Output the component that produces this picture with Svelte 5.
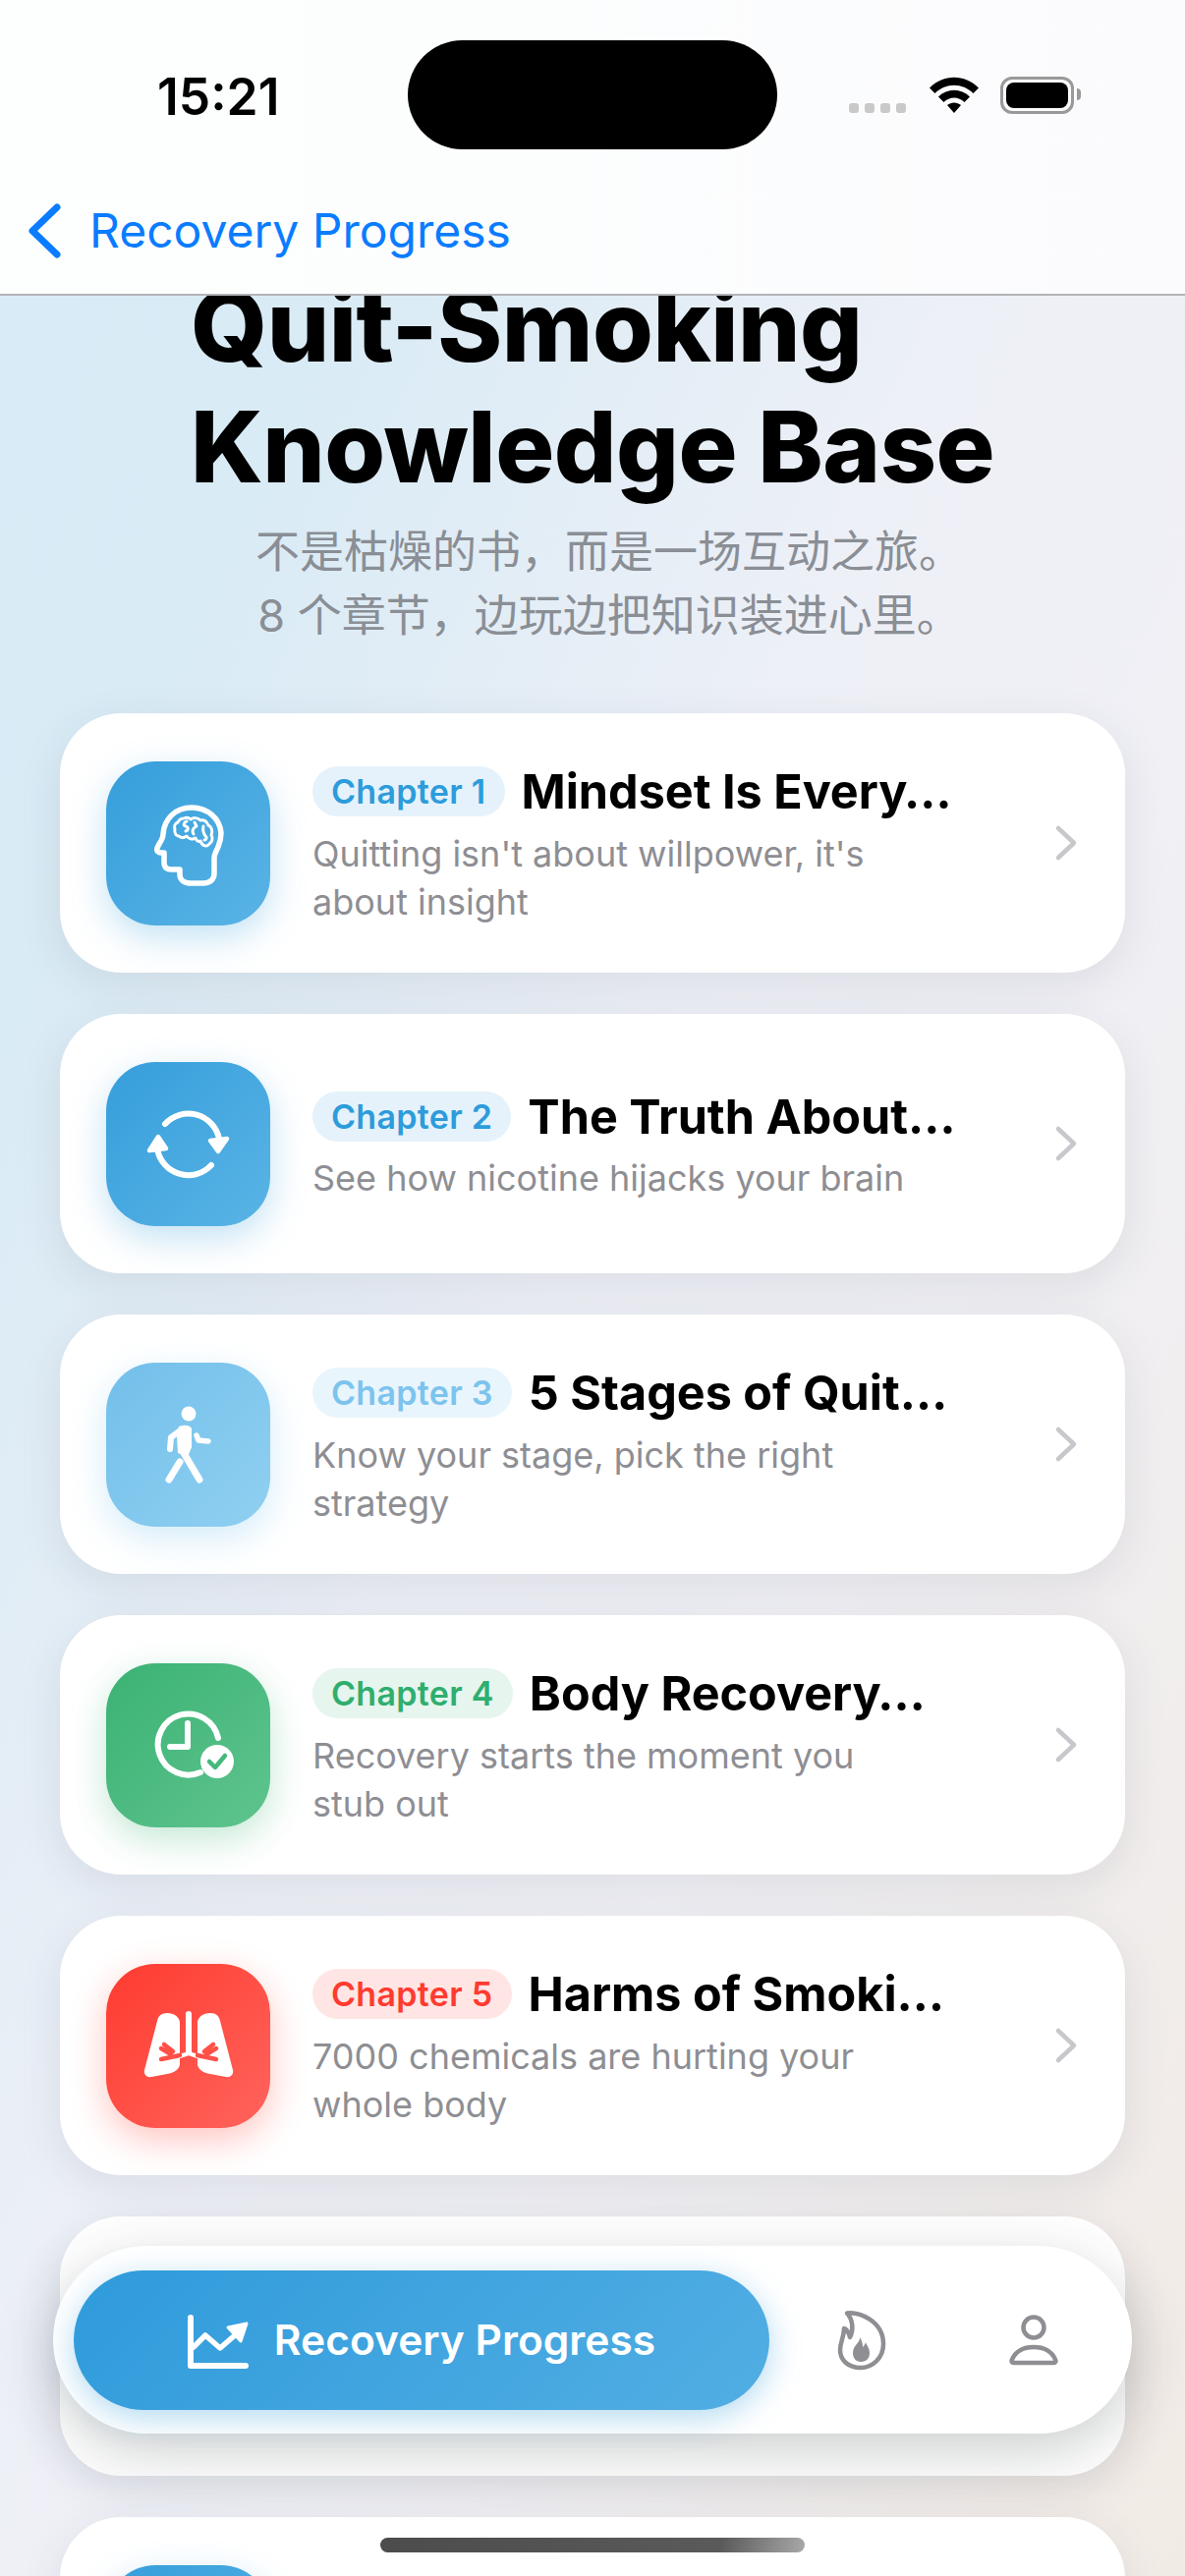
<script lang="ts">
  const chapters = [
    { n: 1, tone: "blue", icon: "brain", title: "Mindset Is Every…", sub: "Quitting isn't about willpower, it's about insight" },
    { n: 2, tone: "blue", icon: "sync", title: "The Truth About…", sub: "See how nicotine hijacks your brain" },
    { n: 3, tone: "sky", icon: "walk", title: "5 Stages of Quit…", sub: "Know your stage, pick the right strategy" },
    { n: 4, tone: "green", icon: "clock", title: "Body Recovery…", sub: "Recovery starts the moment you stub out" },
    { n: 5, tone: "red", icon: "lungs", title: "Harms of Smoki…", sub: "7000 chemicals are hurting your whole body" },
  ];
</script>

{#snippet glyph(name: string)}
  <svg class="glyph" viewBox="0 0 167 167" fill="none" stroke="#fff" stroke-linecap="round" stroke-linejoin="round">
    {#if name === "brain"}
      <g transform="translate(32 16)">
        <path stroke-width="5.5" d="M55 31C38 31 27 43 26 58C26 62 24 65 22 68L20 72C19 75 21 77 24 77L27 77L27 87C27 92 30 94 34 94L43 94L43 99C43 105 48 108 54 108L67 108C74 108 78 104 78 98L78 82C78 78 80 76 82 71C84 66 85 62 85 57C84 42 71 31 55 31Z" />
        <path stroke-width="3" d="M47 42C44 42 42 44 41 46C38 47 37 50 38 53C37 56 39 60 42 60C44 62 47 62 50 60C52 63 56 64 59 62C60 65 62 66 64 65C66 71 71 71 73 68C76 66 77 62 75 59C77 55 75 50 72 49C71 45 67 43 64 44C61 41 57 41 54 43C52 41 49 41 47 42Z" />
        <path stroke-width="3" d="M50 45C47 46 46 49 49 50C52 51 52 54 49 55M58 46L60 50C56 52 55 55 57 58M67 50C66 54 67 57 69 60C71 61 70 64 68 64" />
      </g>
    {:else if name === "sync"}
      <path stroke-width="6" d="M60 63A32 32 0 0 1 115 78M107 105A32 32 0 0 1 52 88" />
      <path fill="#fff" stroke-width="4.5" d="M106 80L123 78L114 91ZM44 90L61 88L53 76Z" />
    {:else if name === "walk"}
      <g transform="translate(22 14)">
        <circle cx="62" cy="38" r="7.5" fill="#fff" stroke="none" />
        <path fill="#fff" stroke="none" d="M52 51C57 49 63 49 65 53L65 72L61 82L51 78L50 60Z" />
        <path stroke-width="6" d="M55 54L44 62L43 74" />
        <path stroke-width="5.5" d="M70 60L72 65L82 66" />
        <path stroke-width="7" d="M57 78L73 105M53 87L42 105" />
      </g>
    {:else if name === "clock"}
      <path stroke-width="6" d="M114 76A31 31 0 1 0 96 111M83 61L83 85L65 85" />
      <circle cx="113" cy="100" r="17" fill="#fff" stroke="none" />
      <path stroke="#45b87c" stroke-width="4.5" d="M105 100L111 106L121 94" />
    {:else if name === "lungs"}
      <path fill="#fff" stroke="none" d="M62 50C56 50 53 53 52 58L39 108C38 112 41 116 46 115L62 112C69 111 75 107 75 102L75 60C75 54 69 50 62 50Z" />
      <path fill="#fff" stroke="none" d="M106 50C112 50 115 53 116 58L129 108C130 112 127 116 122 115L106 112C99 111 93 107 93 102L93 60C93 54 99 50 106 50Z" />
      <path stroke-width="6" d="M84 51L84 90" />
      <path stroke-width="4" d="M75 94L84 91L93 94" />
      <path stroke="#ff5048" stroke-width="4.5" d="M75 93L56 97M68 89L59 82M66 92L56 86M93 93L112 97M100 89L109 82M102 92L112 86" />
    {/if}
  </svg>
{/snippet}

<div class="screen">
  <main class="page">
    <h1>Quit-Smoking<br />Knowledge Base</h1>
    <p class="lede">不是枯燥的书，而是一场互动之旅。<br />8 个章节，边玩边把知识装进心里。</p>

    <section class="list">
      {#each chapters as c}
        <article class="card">
          <div class="tile {c.tone}">{@render glyph(c.icon)}</div>
          <div class="body">
            <div class="head">
              <span class="badge {c.tone}">Chapter {c.n}</span>
              <span class="title">{c.title}</span>
            </div>
            <p class="sub">{c.sub}</p>
          </div>
          <svg class="chev" viewBox="0 0 24 38" fill="none" stroke="#c7c7cc" stroke-width="4.5" stroke-linecap="round" stroke-linejoin="round">
            <path d="M4 4L20 19L4 34" />
          </svg>
        </article>
      {/each}
      <article class="card"></article>
      <article class="card"><div class="tile blue"></div></article>
    </section>
  </main>

  <header class="top">
    <div class="status">
      <span class="time">15:21</span>
      <div class="island"></div>
      <div class="indicators">
        <div class="dots"><i></i><i></i><i></i><i></i></div>
        <svg class="wifi" viewBox="0 0 50 38" fill="#000">
          <path d="M0 11.5C14-3 36-3 50 11.5L44.5 17C33.5 6 16.5 6 5.5 17Z" />
          <path d="M9 20.5C18 11.5 32 11.5 41 20.5L35.5 26C29.5 20 20.5 20 14.5 26Z" />
          <path d="M18 29C22 25.5 28 25.5 32 29L25 37Z" />
        </svg>
        <div class="battery"><b></b></div>
      </div>
    </div>
    <nav class="back">
      <svg class="back-chev" viewBox="0 0 34 56" fill="none" stroke="#0a7cff" stroke-width="7" stroke-linecap="round" stroke-linejoin="round">
        <path d="M30 4L5 28L30 52" />
      </svg>
      <span>Recovery Progress</span>
    </nav>
  </header>

  <div class="tabbar">
    <div class="tab-active">
      <svg class="chart" viewBox="0 0 100 80" fill="none" stroke="#fff" stroke-linecap="round" stroke-linejoin="round">
        <path stroke-width="6" d="M27 17L27 66L83 66" />
        <path stroke-width="5.5" d="M30 47L42 35L57 48L72 35" />
        <path fill="#fff" stroke-width="3" d="M65 27L84 23L78 41Z" />
      </svg>
      <span>Recovery Progress</span>
    </div>
    <div class="tab">
      <svg class="tab-icon" viewBox="50 47 60 70" fill="none" stroke="#8e8e93" stroke-width="4.5" stroke-linecap="round" stroke-linejoin="round">
        <path d="M64 54.5C76 53 101 62 101 86C101 100 90 110 78 110C65 110 57 102 57 92C57 84 61 79 61 70C64 71 66 75 67 79C71 71 70 61 64 54.5Z" />
        <path fill="#8e8e93" stroke="none" d="M77 79C78 84 70 87 70 95C70 100 73 104 78 104C84 104 87 100 87 95C87 90 84 87 83 84C82 87 81 88 80 89C80 85 79 82 77 79Z" />
      </svg>
    </div>
    <div class="tab">
      <svg class="tab-icon" viewBox="0 -5 60 70" fill="none" stroke="#8e8e93" stroke-width="4.5" stroke-linejoin="round">
        <circle cx="30" cy="17" r="10.5" />
        <path d="M10 53C7.5 53 7 51.5 8 49.5C11.5 42 19 37 30 37C41 37 48.5 42 52 49.5C53 51.5 52.5 53 50 53Z" />
      </svg>
    </div>
  </div>

  <div class="home"></div>
</div>

<style>
  :global(body) {
    margin: 0;
  }

  .screen {
    position: relative;
    width: 1206px;
    height: 2622px;
    overflow: hidden;
    font-family: Inter, "Noto Sans CJK SC", sans-serif;
    background: linear-gradient(
      to bottom right,
      #d8ecf7 0%,
      #d9ebf5 20%,
      #eef0f7 48%,
      #f0f0f5 65%,
      #f2ebe5 100%
    );
  }

  .page {
    padding: 270px 61px 0;
  }

  h1 {
    width: fit-content;
    margin: 0 auto;
    font-size: 100px;
    line-height: 123px;
    font-weight: 800;
    letter-spacing: -0.5px;
    color: #000;
  }

  .lede {
    margin: 13px 0 0;
    padding-left: 34px;
    font-size: 45px;
    line-height: 65px;
    color: #8a8e95;
    text-align: center;
  }

  .list {
    display: flex;
    flex-direction: column;
    gap: 42px;
    margin-top: 67px;
  }

  .card {
    display: flex;
    align-items: center;
    gap: 43px;
    flex: none;
    box-sizing: border-box;
    height: 264px;
    padding: 0 48px 0 47px;
    background: #fff;
    border-radius: 62px;
    box-shadow: 0 12px 44px rgba(50, 60, 80, 0.1);
  }

  .tile {
    display: flex;
    flex: none;
    width: 167px;
    height: 167px;
    border-radius: 50px;
  }

  .tile.blue {
    background: linear-gradient(135deg, #359edb, #5ab4e5);
    box-shadow: 0 12px 36px rgba(53, 158, 219, 0.3);
  }

  .tile.sky {
    background: linear-gradient(135deg, #72bfea, #90d0f1);
    box-shadow: 0 12px 36px rgba(114, 191, 234, 0.3);
  }

  .tile.green {
    background: linear-gradient(135deg, #3bb273, #5fc48f);
    box-shadow: 0 12px 36px rgba(59, 178, 115, 0.3);
  }

  .tile.red {
    background: linear-gradient(135deg, #ff3b30, #ff645c);
    box-shadow: 0 12px 36px rgba(255, 59, 48, 0.3);
  }

  .glyph {
    width: 167px;
    height: 167px;
  }

  .body {
    flex: 1;
    min-width: 0;
    padding-top: 3px;
  }

  .head {
    display: flex;
    align-items: center;
    gap: 17px;
    height: 58px;
    white-space: nowrap;
  }

  .badge {
    padding: 0 19px;
    height: 51px;
    line-height: 51px;
    border-radius: 26px;
    font-size: 34px;
    font-weight: 600;
    letter-spacing: 0.3px;
  }

  .badge.blue {
    background: #e5f2fb;
    color: #2d9cdb;
  }

  .badge.sky {
    background: #e9f5fc;
    color: #7cc4ee;
  }

  .badge.green {
    background: #e6f5ee;
    color: #2fae6e;
  }

  .badge.red {
    background: #ffe6e5;
    color: #ff3b30;
  }

  .title {
    font-size: 48.5px;
    font-weight: 700;
    color: #000;
  }

  .sub {
    margin: 10px 0 0;
    max-width: 622px;
    font-size: 36px;
    line-height: 49px;
    color: #8e8e93;
  }

  .chev {
    flex: none;
    width: 24px;
    height: 38px;
  }

  .top {
    position: absolute;
    top: 0;
    left: 0;
    right: 0;
    height: 301px;
    box-sizing: border-box;
    background: linear-gradient(90deg, #fdfffe, #fbfbfd);
    border-bottom: 2px solid #b2b4b7;
  }

  .status {
    position: relative;
    display: flex;
    align-items: center;
    justify-content: space-between;
    height: 193px;
    padding: 0 113px 0 160px;
  }

  .time {
    margin-top: 2px;
    font-size: 51.5px;
    font-weight: 600;
    color: #000;
  }

  .island {
    position: absolute;
    left: 415px;
    top: 41px;
    width: 376px;
    height: 111px;
    border-radius: 56px;
    background: #000;
  }

  .indicators {
    display: flex;
    align-items: center;
    gap: 22px;
  }

  .dots {
    display: flex;
    gap: 6px;
    margin-top: 26px;
    margin-right: 2px;
  }

  .dots i {
    width: 10px;
    height: 10px;
    border-radius: 3px;
    background: #c9c9c9;
  }

  .wifi {
    width: 50px;
    height: 38px;
  }

  .battery {
    position: relative;
    box-sizing: border-box;
    width: 75px;
    height: 38px;
    padding: 3px;
    border: 3px solid #999;
    border-radius: 12px;
  }

  .battery b {
    display: block;
    height: 100%;
    border-radius: 8px;
    background: #000;
  }

  .battery::after {
    content: "";
    position: absolute;
    right: -10px;
    top: 9px;
    width: 4px;
    height: 12px;
    border-radius: 0 4px 4px 0;
    background: #999;
  }

  .back {
    display: flex;
    align-items: center;
    gap: 29px;
    padding: 12px 0 0 28px;
    color: #0a7cff;
    font-size: 48px;
  }

  .back-chev {
    width: 34px;
    height: 56px;
  }

  .tabbar {
    position: absolute;
    left: 54px;
    top: 2286px;
    display: flex;
    align-items: center;
    gap: 4px;
    box-sizing: border-box;
    width: 1098px;
    height: 191px;
    padding: 0 15px 0 21px;
    border-radius: 96px;
    background: #fff;
    box-shadow: 0 18px 60px rgba(40, 50, 50, 0.24);
  }

  .tab-active {
    display: flex;
    align-items: center;
    justify-content: center;
    flex: none;
    gap: 26px;
    width: 708px;
    height: 142px;
    margin-right: 6px;
    border-radius: 71px;
    background: linear-gradient(135deg, #2f9bdb, #52aee3);
    box-shadow: 0 8px 32px rgba(53, 158, 219, 0.38);
    color: #fff;
    font-size: 42.5px;
    font-weight: 600;
  }

  .chart {
    width: 100px;
    height: 80px;
    margin: 0 -14px 0 -24px;
  }

  .tab {
    display: flex;
    flex: 1;
    justify-content: center;
  }

  .tab-icon {
    width: 60px;
    height: 70px;
  }

  .home {
    position: absolute;
    left: 387px;
    top: 2583px;
    width: 432px;
    height: 15px;
    border-radius: 8px;
    background: linear-gradient(100deg, #4c4c4c, #5a5a5a 80%, #a8a8a8);
  }
</style>
